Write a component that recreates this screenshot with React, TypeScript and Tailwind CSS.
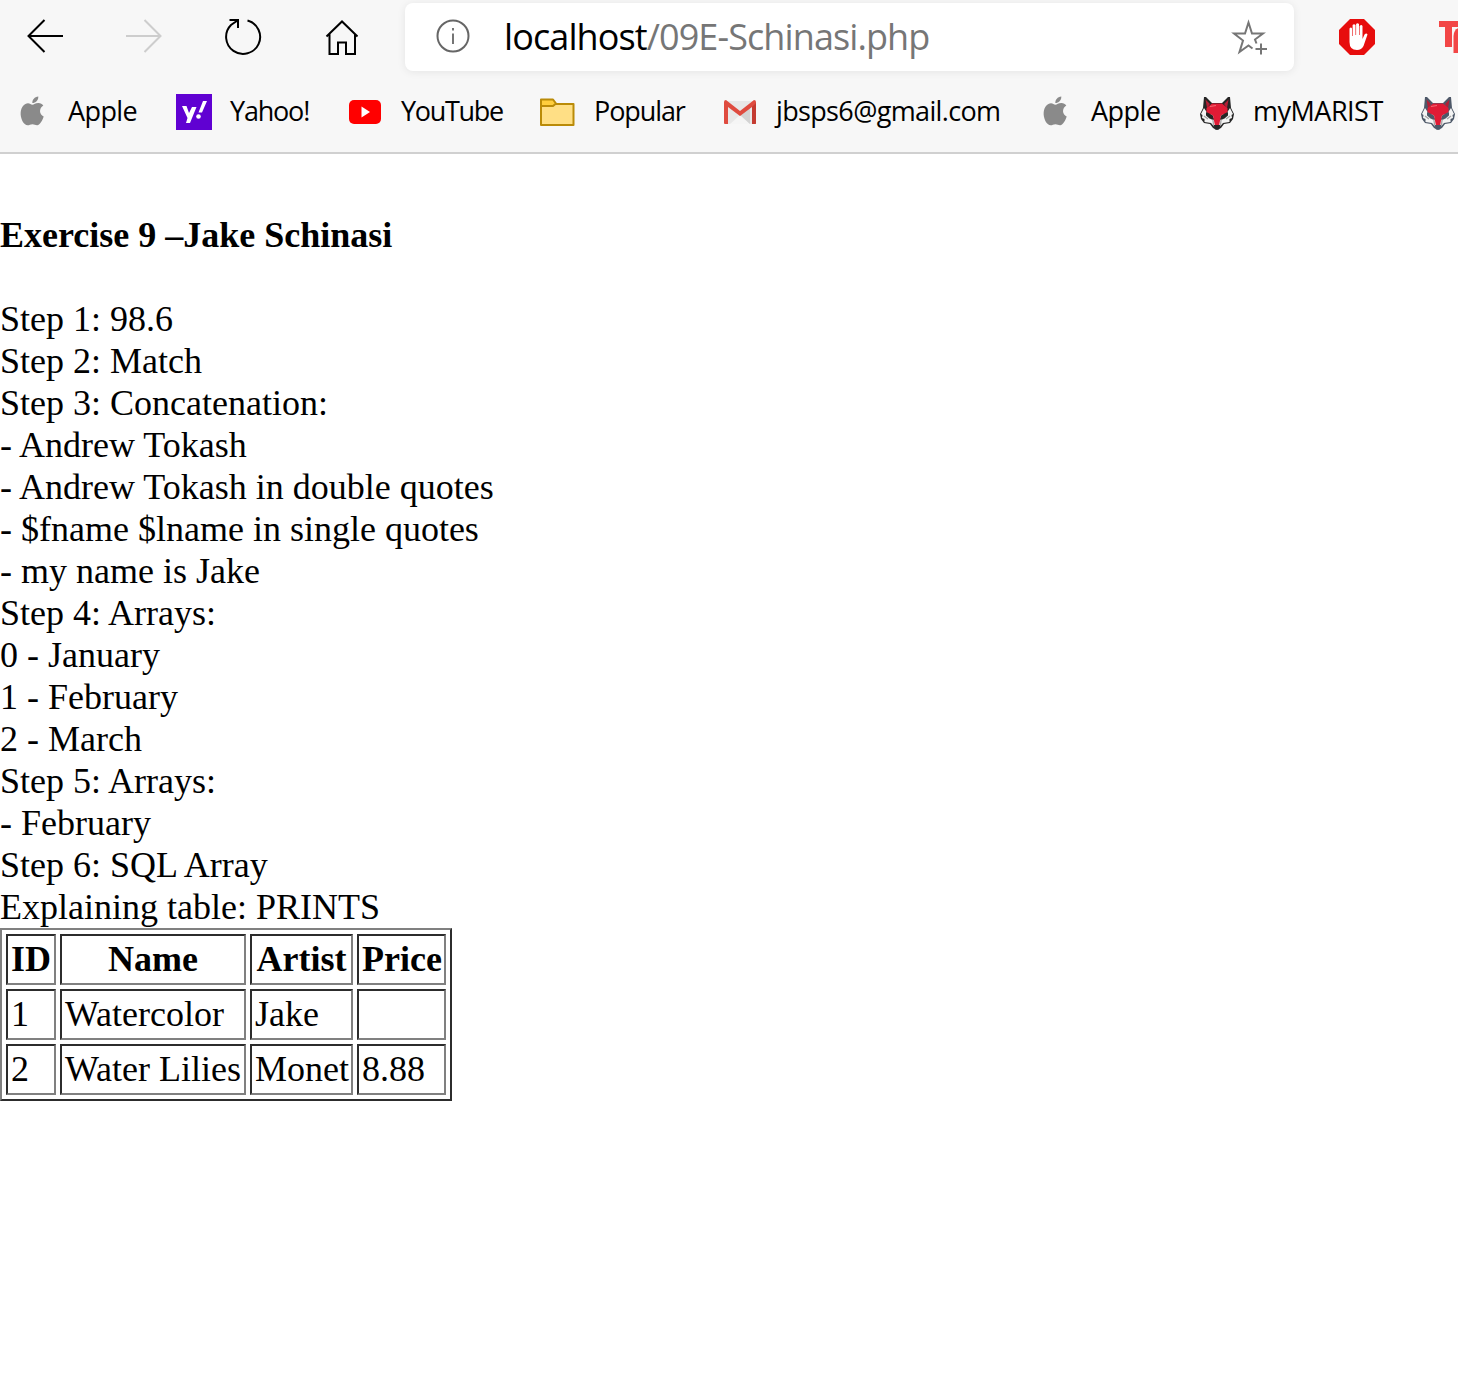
import React from "react";

const Fox = ({ dark }: { dark: string }) => (
  <svg viewBox="0 0 36 36" className="h-9 w-9 shrink-0">
    <path d="M5 2L7 2L13 8H23L29 2L31 2L32 13L35 19L34 24L31 28L25 29L22 33L18 35L14 33L11 29L5 28L2 24L1 19L4 13Z" fill={dark} />
    <path d="M5 13L2 19L3.500 20L3 23L5.500 24L5.500 27L12 28L15 31.500L17 33H19L21 31.500L24 28L30.500 27L30.500 24L33 23L32.500 20L34 19L31 13L27 19H9Z" fill="#f4f4f4" />
    <path d="M11 23L14 25L14.500 30M25 23L22 25L21.500 30M5 21L9 24M31 21L27 24" stroke="#a5a5a5" strokeWidth="1.300" fill="none" />
    <path d="M6.500 4.500L11 9L8 13Z M29.500 4.500L25 9L28 13Z" fill="#b51e35" />
    <path d="M7 17L13.500 20L15.500 25L10.500 23.500L7 20.500Z M29 17L22.500 20L20.500 25L25.500 23.500L29 20.500Z" fill={dark} />
    <path d="M13 8.500H23L28.500 13V17L22 20.500L20 31H16L14 20.500L7.500 17V13Z" fill="#e01b35" />
    <path d="M14.500 30H21.500L20 34.500H16Z" fill={dark} />
    <path d="M11 11.500L17 10.500" stroke="#f26a72" strokeWidth="1.200" />
  </svg>
);

const AppleLogo = () => (
  <svg viewBox="0 0 36 36" className="h-9 w-9 shrink-0" fill="#8a8a8a">
    <path d="M18.300 8C18.300 4.500 20.500 2 24.300 1.500C24.500 5.500 21.500 8 18.300 8Z" />
    <path d="M18.300 9.700C20 9.700 21.500 7.900 24.500 8C26.500 8.100 28.200 9 29.300 10.500C24.800 13.200 25 19.500 29.700 21.500C28.700 25 26 30 23.200 30.200C21.500 30.300 20.400 29.200 18.400 29.200C16.400 29.200 15.300 30.300 13.800 30.300C9.500 30.300 6 23 6.700 17C7.200 12 10.500 8.200 14 8.200C15.900 8.200 17 9.700 18.300 9.700Z" />
  </svg>
);

const Yahoo = () => (
  <svg viewBox="0 0 36 36" className="relative -top-px h-9 w-9 shrink-0">
    <path fill="#6001d2" d="M0 0H36V36H0Z" />
    <path d="M6 12H10.500L13 19L16 13H20.500L14 29H10L11.500 24Z M27 7H31L26 18.500H22.500Z" fill="#fff" />
    <circle cx="22.500" cy="22.500" r="2.300" fill="#fff" />
  </svg>
);

const YouTube = () => (
  <svg viewBox="0 0 36 36" className="relative -top-px h-9 w-9 shrink-0">
    <rect x="2" y="6" width="32" height="24" rx="5" fill="#f00" />
    <path d="M14.500 12.500V23.500L23 18Z" fill="#fff" />
  </svg>
);

const Folder = () => (
  <svg viewBox="0 0 36 36" className="relative -top-px h-9 w-9 shrink-0 overflow-visible" strokeWidth="2" stroke="#ba8b08" strokeLinejoin="round">
    <path d="M1 10H33.500V31H1Z" fill="#ffdf85" />
    <path d="M1 5.500H13L16 9.500L13 12H1Z" fill="#ffce3d" />
  </svg>
);

const Gmail = () => (
  <svg viewBox="0 0 36 36" className="relative -top-px h-9 w-9 shrink-0">
    <path d="M3 7H33V30H3Z" fill="#e8e8e8" />
    <path d="M8 30L18 21L28 30Z" fill="#f5f5f5" />
    <path d="M28 12L18 21L28 30Z" fill="#d3d3d3" />
    <path d="M2 8V29Q2 30 3 30H6V13L18 22L30 13V30H33Q34 30 34 29V8Q34 6 32 6L18 17L4 6Q2 6 2 8Z" fill="#df4b3f" />
    <path d="M30 13L34 9V29Q34 30 33 30H30Z" fill="#c43b31" />
  </svg>
);

const bookmarks = [
  { icon: <AppleLogo />, label: "Apple", w: "w-[162px]", t: "tracking-[-0.600px]" },
  { icon: <Yahoo />, label: "Yahoo!", w: "w-[171px]", t: "tracking-[-1.200px]" },
  { icon: <YouTube />, label: "YouTube", w: "w-[193px]", t: "tracking-[-1.300px]" },
  { icon: <Folder />, label: "Popular", w: "w-[182px]", t: "tracking-[-1.100px]" },
  { icon: <Gmail />, label: "jbsps6@gmail.com", w: "w-[315px]", t: "tracking-[-0.650px]" },
  { icon: <AppleLogo />, label: "Apple", w: "w-[162px]", t: "tracking-[-0.5px]" },
  { icon: <Fox dark="#252525" />, label: "myMARIST", w: "w-[221px]", t: "tracking-[-0.5px]" },
  { icon: <Fox dark="#4d5868" />, label: "", w: "w-9", t: "" },
];

const lines = [
  "Step 1: 98.6",
  "Step 2: Match",
  "Step 3: Concatenation:",
  "- Andrew Tokash",
  "- Andrew Tokash in double quotes",
  "- $fname $lname in single quotes",
  "- my name is Jake",
  "Step 4: Arrays:",
  "0 - January",
  "1 - February",
  "2 - March",
  "Step 5: Arrays:",
  "- February",
  "Step 6: SQL Array",
  "Explaining table: PRINTS",
];

const rows = [
  ["1", "Watercolor", "Jake", ""],
  ["2", "Water Lilies", "Monet", "8.88"],
];

const cell = "h-[51px] border-2 border-t-[#2c2c2c] border-l-[#2c2c2c] border-r-[#808080] border-b-[#808080] p-0 pl-[3px] leading-[47px]";

export default function App() {
  return (
    <div className="h-[1399px] w-[1458px] overflow-hidden bg-white text-black">
      <header className="h-[154px] overflow-hidden border-b-2 border-[#d0d0d0] bg-[#f7f7f7] font-['Open_Sans',sans-serif]">
        <div className="flex h-[74px] items-start">
          <svg viewBox="0 0 405 74" className="h-[74px] w-[405px] shrink-0" fill="none" stroke="#000" strokeWidth="2">
            <path d="M63 36H28M44.500 20L28.500 36L44.500 52" />
            <path d="M126 36H161M144.500 20L160.500 36L144.500 52" stroke="#cdcdcd" />
            <path d="M247.500 20.500A17 17 0 1 1 231 25L237.500 20.500M229.500 20H238V28" />
            <path d="M326.500 36.500L342 21.500L357.500 36.500M329.500 34V54H338V42.500H346V54H355V34" />
          </svg>
          <div className="mt-[3px] flex h-[68px] w-[889px] shrink-0 items-center rounded-lg bg-white pl-[31px] shadow-[0_1px_8px_rgba(0,0,0,0.08)]">
            <svg viewBox="0 0 34 34" className="mb-[2px] h-[34px] w-[34px] shrink-0" fill="none" stroke="#666" strokeWidth="2">
              <circle cx="17" cy="17" r="15.500" />
              <path d="M17 14.500V25M17 9V11.500" strokeWidth="1.800" />
            </svg>
            <div className="ml-[34px] w-[724px] shrink-0 text-[36px] leading-[48px] tracking-[-0.900px] whitespace-nowrap text-[#767676]">
              <span className="text-black">localhost</span>/09E-Schinasi.php
            </div>
            <svg viewBox="0 0 40 40" className="mt-[2px] h-10 w-10 shrink-0" fill="none" stroke="#767676" strokeWidth="2">
              <path d="M24.500 30.500L20.500 27.500L11.500 34L15 22.500L6 15.500H17L20.500 4.500L24 15.500H35L27 21.500L28.500 25.500" />
              <path d="M33 25.500V36.500M27.500 31H39" />
            </svg>
          </div>
          <svg viewBox="0 0 36 36" className="mt-[19px] ml-[45px] h-9 w-9 shrink-0">
            <path d="M11 0H25L36 11V25L25 36H11L0 25V11Z" fill="#e70d0d" />
            <path d="M10.500 9.500Q12 7.500 13 9.500V17H13.600V6Q15 4.500 16.500 6V16H17.100V5Q18.500 3.500 20 5V16H20.600V7Q22.500 5 23.500 7V20L25.500 15.500Q27.500 13.500 28.500 15.500L24.500 27Q22.500 31 18 31Q10.500 31 10.500 23Z" fill="#fff" />
          </svg>
          <svg viewBox="0 0 20 36" className="mt-[19px] ml-16 h-9 w-5 shrink-0" fill="#f24646">
            <path d="M0 2H20V8H13V28H6V8H0Z" />
            <path d="M14.500 34V17Q15 10 20 9V34Z" />
          </svg>
        </div>
        <nav className="flex h-[78px] items-center pl-[14px]">
          {bookmarks.map((b, i) => (
            <div key={i} className={`flex shrink-0 items-center ${b.w}`}>
              {b.icon}
              {b.label && <span className={`-mt-1 ml-[18px] text-[27px] leading-9 whitespace-nowrap ${b.t}`}>{b.label}</span>}
            </div>
          ))}
        </nav>
      </header>
      <main className="pt-[60px] font-['Liberation_Serif',serif] text-[36px] leading-[42px]">
        <h4 className="mb-[42px] font-bold">Exercise 9 –Jake Schinasi</h4>
        {lines.map((l) => (
          <p key={l} className="whitespace-nowrap">{l}</p>
        ))}
        <table className="w-[452px] table-fixed border-separate border-spacing-1 border-2 border-t-[#808080] border-r-[#2c2c2c] border-b-[#2c2c2c] border-l-[#808080]">
          <colgroup>
            <col className="w-[50px]" />
            <col className="w-[186px]" />
            <col className="w-[103px]" />
            <col className="w-[89px]" />
          </colgroup>
          <thead>
            <tr>
              {["ID", "Name", "Artist", "Price"].map((h) => (
                <th key={h} className={`${cell} pr-[3px] text-center font-bold whitespace-nowrap`}>{h}</th>
              ))}
            </tr>
          </thead>
          <tbody>
            {rows.map((r) => (
              <tr key={r[0]}>
                {r.map((c, i) => (
                  <td key={i} className={`${cell} whitespace-nowrap`}>{c}</td>
                ))}
              </tr>
            ))}
          </tbody>
        </table>
      </main>
    </div>
  );
}
